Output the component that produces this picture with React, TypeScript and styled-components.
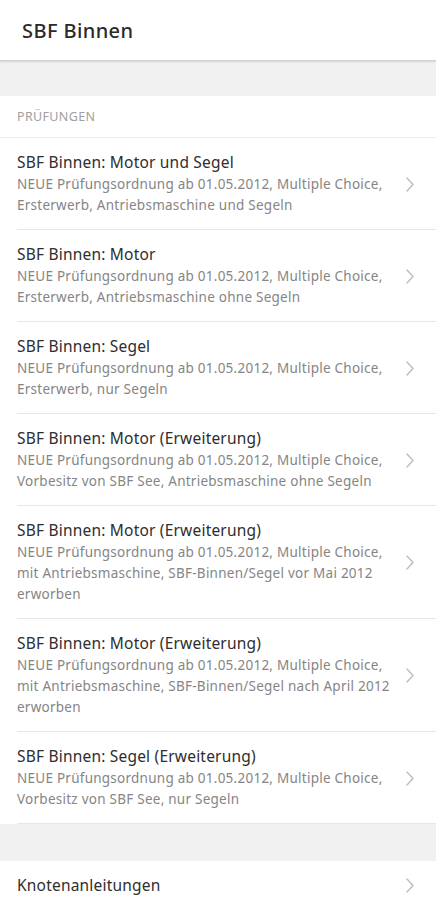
import styled, { createGlobalStyle } from "styled-components";

const GlobalStyle = createGlobalStyle`
  html, body {
    margin: 0;
    padding: 0;
    background: #f1f1f1;
    font-family: "Noto Sans", "Open Sans", Roboto, sans-serif;
  }
  * { box-sizing: border-box; }
`;

type Exam = { title: string; lines: string[] };

const exams: Exam[] = [
  {
    title: "SBF Binnen: Motor und Segel",
    lines: [
      "NEUE Prüfungsordnung ab 01.05.2012, Multiple Choice,",
      "Ersterwerb, Antriebsmaschine und Segeln",
    ],
  },
  {
    title: "SBF Binnen: Motor",
    lines: [
      "NEUE Prüfungsordnung ab 01.05.2012, Multiple Choice,",
      "Ersterwerb, Antriebsmaschine ohne Segeln",
    ],
  },
  {
    title: "SBF Binnen: Segel",
    lines: [
      "NEUE Prüfungsordnung ab 01.05.2012, Multiple Choice,",
      "Ersterwerb, nur Segeln",
    ],
  },
  {
    title: "SBF Binnen: Motor (Erweiterung)",
    lines: [
      "NEUE Prüfungsordnung ab 01.05.2012, Multiple Choice,",
      "Vorbesitz von SBF See, Antriebsmaschine ohne Segeln",
    ],
  },
  {
    title: "SBF Binnen: Motor (Erweiterung)",
    lines: [
      "NEUE Prüfungsordnung ab 01.05.2012, Multiple Choice,",
      "mit Antriebsmaschine, SBF-Binnen/Segel vor Mai 2012",
      "erworben",
    ],
  },
  {
    title: "SBF Binnen: Motor (Erweiterung)",
    lines: [
      "NEUE Prüfungsordnung ab 01.05.2012, Multiple Choice,",
      "mit Antriebsmaschine, SBF-Binnen/Segel nach April 2012",
      "erworben",
    ],
  },
  {
    title: "SBF Binnen: Segel (Erweiterung)",
    lines: [
      "NEUE Prüfungsordnung ab 01.05.2012, Multiple Choice,",
      "Vorbesitz von SBF See, nur Segeln",
    ],
  },
];

const Chevron = () => (
  <ChevronBox>
    <svg width="8" height="15" viewBox="0 0 8 15" fill="none">
      <polyline
        points="1,1 7,7.5 1,14"
        stroke="#bdbdbd"
        strokeWidth="1.4"
        strokeLinecap="round"
        strokeLinejoin="round"
      />
    </svg>
  </ChevronBox>
);

const App = () => {
  return (
    <Page>
      <GlobalStyle />
      <Toolbar>
        <ToolbarTitle>SBF Binnen</ToolbarTitle>
      </Toolbar>
      <Spacer height={35} />
      <Section>
        <SectionHeader>PRÜFUNGEN</SectionHeader>
        {exams.map((exam, i) => (
          <Row key={i}>
            <RowText>
              <Title>{exam.title}</Title>
              <Subtitle>
                {exam.lines.map((line, j) => (
                  <Line key={j}>{line}</Line>
                ))}
              </Subtitle>
            </RowText>
            <Chevron />
          </Row>
        ))}
      </Section>
      <Spacer height={37} />
      <Section>
        <SimpleRow>
          <RowText>
            <Title>Knotenanleitungen</Title>
          </RowText>
          <Chevron />
        </SimpleRow>
      </Section>
    </Page>
  );
};

const Page = styled.div`
  width: 436px;
  min-height: 900px;
  background: #f1f1f1;
  display: flex;
  flex-direction: column;
`;

const Toolbar = styled.header`
  height: 61px;
  background: #ffffff;
  display: flex;
  align-items: center;
  padding: 0 22px;
  border-bottom: 1px solid #d0d0d0;
  box-shadow: 0 1px 2px rgba(0, 0, 0, 0.12);
  position: relative;
  z-index: 1;
`;

const ToolbarTitle = styled.h1`
  margin: 0;
  margin-top: 1px;
  font-size: 20px;
  font-weight: 500;
  letter-spacing: 0.4px;
  color: #2a2a2a;
`;

const Spacer = styled.div<{ height: number }>`
  height: ${({ height }) => height}px;
`;

const Section = styled.section`
  background: #ffffff;
  display: flex;
  flex-direction: column;
`;

const SectionHeader = styled.div`
  height: 42px;
  padding: 0 17px;
  display: flex;
  align-items: center;
  font-size: 12.5px;
  color: #a0a0a0;
  letter-spacing: 0.35px;
  border-bottom: 1px solid #ececec;
`;

const Row = styled.div`
  display: flex;
  align-items: center;
  margin-left: 17px;
  padding: 14px 22px 13px 0;
  border-bottom: 1px solid #e6e6e6;
`;

const SimpleRow = styled(Row)`
  height: 48px;
  padding-top: 0;
  padding-bottom: 0;
  border-bottom: none;
`;

const RowText = styled.div`
  flex: 1;
  display: flex;
  flex-direction: column;
  gap: 2px;
  min-width: 0;
`;

const Title = styled.div`
  font-size: 15.5px;
  line-height: 20px;
  letter-spacing: 0.2px;
  color: #2e2e2e;
`;

const Subtitle = styled.div`
  font-size: 13.5px;
  line-height: 21px;
  letter-spacing: 0.25px;
  color: #858585;
`;

const Line = styled.span`
  display: block;
  white-space: nowrap;
`;

const ChevronBox = styled.div`
  flex: none;
  width: 8px;
  height: 15px;
  display: flex;
  margin-left: 8px;
`;

export default App;
